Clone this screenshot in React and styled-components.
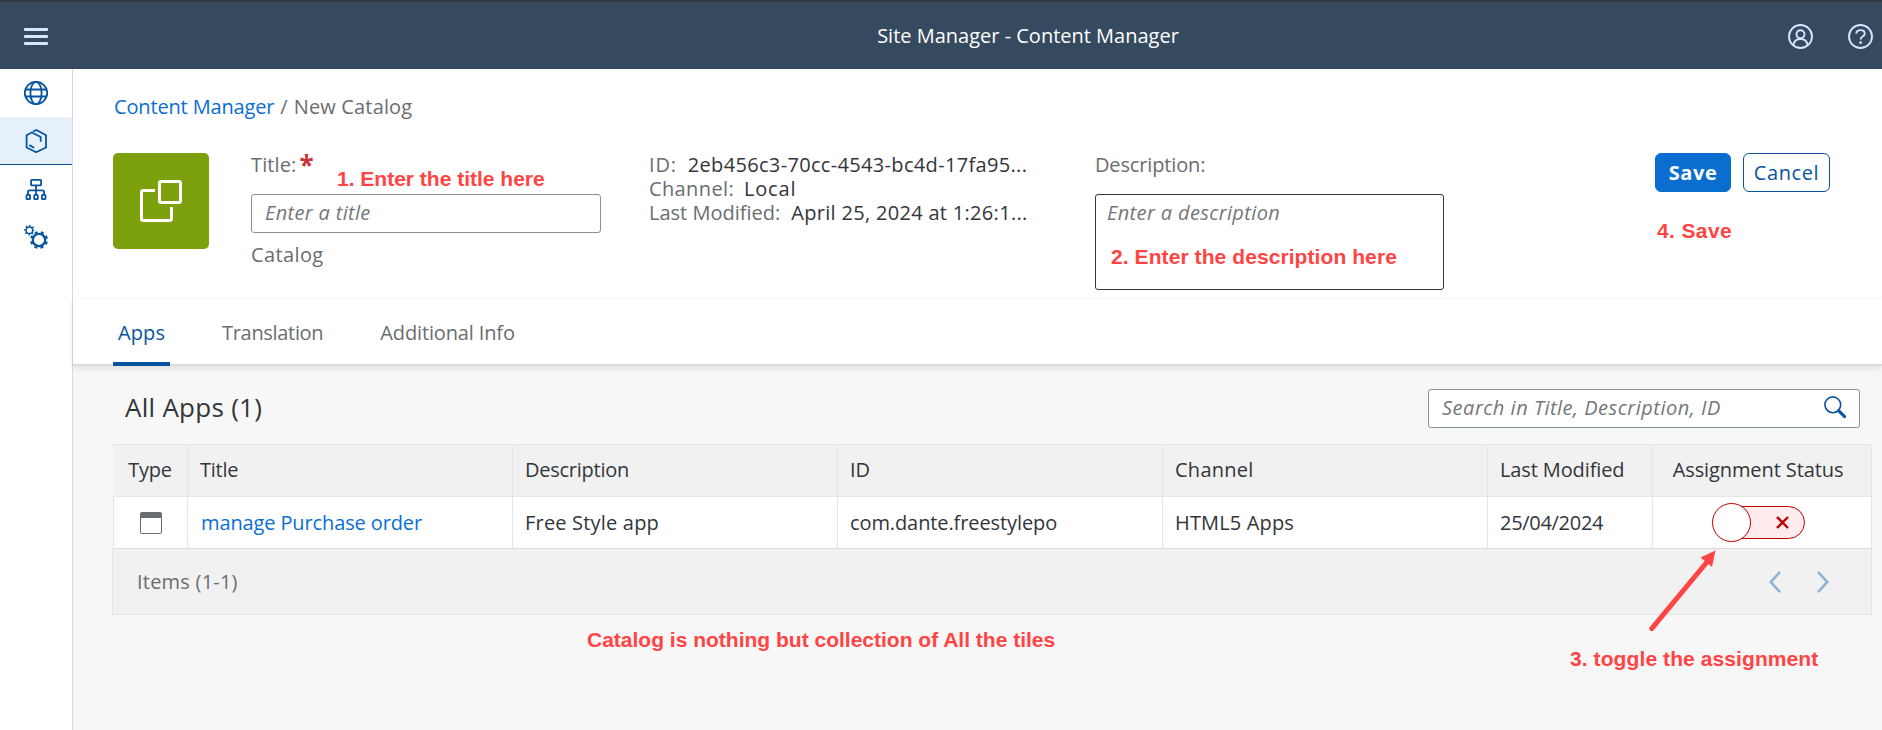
import React from "react";
import styled, { createGlobalStyle } from "styled-components";

const color = {
  shell: "#354a5f",
  shellIcon: "#d1e8ff",
  text: "#32363a",
  label: "#6a6d70",
  link: "#0a6ed1",
  accent: "#0854a0",
  line: "#e5e5e5",
  negative: "#bb0000",
  note: "#ff4444",
};

const GlobalStyle = createGlobalStyle`
  * { box-sizing: border-box; }
  body {
    margin: 0;
    background: #f7f7f7;
    color: ${color.text};
    font: 20px/24px "Open Sans", "Noto Sans", sans-serif;
  }
`;

const Page = styled.div`
  position: relative;
  height: 730px;
  overflow: hidden;
  display: flex;
  flex-direction: column;
`;

const ShellBar = styled.header`
  height: 69px;
  flex: none;
  display: grid;
  grid-template-columns: 304px 1fr 130px;
  align-items: center;
  padding-top: 3px;
  background: linear-gradient(#2f374a 2px, #49454f 2px, #49454f 3px, ${color.shell} 3px);
`;

const MenuButton = styled.div`
  width: 24px;
  margin: 0 0 0 24px;
  display: flex;
  flex-direction: column;
  gap: 4px;
`;

const MenuBar = styled.span`
  height: 3px;
  border-radius: 1px;
  background: ${color.shellIcon};
`;

const ShellTitle = styled.h1`
  margin: 0;
  color: #fff;
  text-align: center;
  font-size: 20px;
  font-weight: 400;
`;

const ShellActions = styled.div`
  display: flex;
  gap: 35px;
  padding-left: 36px;
`;

const Icon = styled.svg`
  display: block;
  flex: none;
  fill: none;
  stroke: currentColor;
  color: ${(p) => p.$color || color.accent};
  stroke-width: ${(p) => p.$stroke || 1.8};
`;

const Body = styled.div`
  flex: 1;
  display: flex;
`;

const SideNav = styled.nav`
  width: 73px;
  flex: none;
  background: #fff;
  border-right: 1px solid #d9d9d9;
`;

const NavItem = styled.div`
  height: 48px;
  display: flex;
  align-items: center;
  justify-content: center;
  background: ${(p) => (p.$active ? "#e5f0fa" : "transparent")};
  box-shadow: ${(p) => (p.$active ? `inset 0 -1px ${color.accent}` : "none")};
`;

const Main = styled.main`
  flex: 1;
  min-width: 0;
`;

const PageHeader = styled.section`
  height: 230px;
  padding: 26px 0 0 40px;
  background: #fff;
  border-bottom: 1px solid #fcfcfc;
`;

const Text = styled.span`
  color: ${(p) => p.$color || "inherit"};
  letter-spacing: ${(p) => p.$track || 0}px;
  white-space: nowrap;
`;

const Breadcrumb = styled.div`
  display: flex;
  gap: 6px;
  padding-left: 1px;
  margin-bottom: 34px;
  color: ${color.label};
`;

const HeaderContent = styled.div`
  display: grid;
  grid-template-columns: 138px 398px 446px 560px 1fr;
  align-items: start;
`;

const Avatar = styled.div`
  width: 96px;
  height: 96px;
  border-radius: 5px;
  background: #7ca10c;
`;

const Field = styled.div`
  display: flex;
  flex-direction: column;
  color: ${color.label};
`;

const FieldLabel = styled.label`
  display: flex;
  height: 24px;
  margin-bottom: 17px;
  gap: 3px;
`;

const Required = styled.span`
  color: #cc3333;
  font-size: 26px;
  font-weight: 700;
  line-height: 24px;
`;

const InputBox = styled.div`
  width: ${(p) => p.$width}px;
  height: ${(p) => p.$height || 39}px;
  display: flex;
  align-items: flex-start;
  justify-content: space-between;
  padding: 6px ${(p) => p.$pad || 13}px;
  border: 1px solid ${(p) => p.$border || "#89919a"};
  border-radius: 3px;
  background: #fff;
  color: #74777a;
  font-style: italic;
`;

const FieldHint = styled.div`
  margin-top: 10px;
`;

const Facts = styled.dl`
  margin: 0;
`;

const Fact = styled.div`
  display: flex;
  gap: ${(p) => p.$gap}px;
`;

const Actions = styled.div`
  display: flex;
  gap: 12px;
`;

const Button = styled.button`
  width: ${(p) => p.$width}px;
  height: 39px;
  padding: 0;
  border: 1px solid ${(p) => (p.$primary ? color.link : color.accent)};
  border-radius: 6px;
  background: ${(p) => (p.$primary ? color.link : "#fff")};
  color: ${(p) => (p.$primary ? "#fff" : color.accent)};
  font: inherit;
  font-weight: ${(p) => (p.$primary ? 700 : 400)};
  line-height: 35px;
  letter-spacing: 0.6px;
`;

const Tabs = styled.div`
  position: relative;
  z-index: 1;
  height: 67px;
  display: flex;
  gap: 47px;
  padding-left: 40px;
  background: #fff;
  box-shadow: inset 0 -2px #dcdcdc, 0 2px 6px rgba(0, 0, 0, 0.1);
`;

const Tab = styled.div`
  height: 67px;
  padding: 0 5px;
  line-height: 67px;
  color: ${(p) => (p.$active ? color.accent : color.label)};
  letter-spacing: ${(p) => p.$track}px;
  box-shadow: ${(p) => (p.$active ? `inset 0 -4px ${color.accent}` : "none")};
`;

const Toolbar = styled.div`
  height: 39px;
  margin: 23px 22px 16px 52px;
  display: flex;
  align-items: center;
  justify-content: space-between;
`;

const SectionTitle = styled.h2`
  margin: 0;
  padding-bottom: 3px;
  font-size: 26px;
  font-weight: 400;
  letter-spacing: 0.27px;
`;

const Table = styled.div`
  margin: 0 10px 0 40px;
`;

const Row = styled.div`
  display: grid;
  grid-template-columns: 75px repeat(4, 325px) 165px 219px;
  height: ${(p) => (p.$head ? 53 : 52)}px;
  background: ${(p) => (p.$head ? "#f1f1f1" : "#fff")};
  border-top: ${(p) => (p.$head ? `1px solid ${color.line}` : "none")};
  border-bottom: 1px solid ${(p) => (p.$head ? color.line : "#d9d9d9")};
  box-shadow: ${(p) => (p.$head ? "none" : `inset 1px 0 ${color.line}`)};
`;

const Cell = styled.div`
  display: flex;
  align-items: center;
  justify-content: ${(p) => (p.$center ? "center" : "flex-start")};
  padding: 0 ${(p) => p.$end || 0}px ${(p) => (p.$head ? 2 : 0)}px ${(p) => p.$start ?? (p.$center ? 0 : 12)}px;
  border-right: 1px solid ${color.line};
`;

const Pager = styled.div`
  height: 66px;
  margin-left: -1px;
  display: flex;
  align-items: center;
  justify-content: space-between;
  padding: 0 42px 0 24px;
  background: #f1f1f1;
  border: 1px solid ${color.line};
  border-top: none;
  color: ${color.label};
`;

const PagerButtons = styled.div`
  display: flex;
  gap: 36px;
`;

const AppGlyph = styled.span`
  width: 22px;
  height: 22px;
  border: 1.5px solid ${color.label};
  border-top-width: 6px;
  border-radius: 2px;
`;

const Switch = styled.div`
  display: flex;
  align-items: center;
`;

const SwitchHandle = styled.span`
  position: relative;
  width: 39px;
  height: 39px;
  margin-right: -20px;
  border: 1px solid ${color.negative};
  border-radius: 50%;
  background: #fff;
`;

const SwitchTrack = styled.span`
  width: 74px;
  height: 33px;
  display: flex;
  align-items: center;
  justify-content: flex-end;
  padding-right: 15px;
  border: 1px solid ${color.negative};
  border-radius: 0 17px 17px 0;
  background: #ffebeb;
`;

const Note = styled.div`
  position: absolute;
  z-index: 2;
  left: ${(p) => p.$x}px;
  top: ${(p) => p.$y}px;
  color: ${color.note};
  font: bold 21px/24px "Liberation Sans", Arial, sans-serif;
  letter-spacing: ${(p) => p.$track || 0}px;
  white-space: nowrap;
`;

const Arrow = styled.svg`
  position: absolute;
  z-index: 2;
  left: 1640px;
  top: 540px;
`;

const GlobeIcon = () => (
  <Icon width="24" height="24" viewBox="0 0 24 24">
    <circle cx="12" cy="12" r="11.2" />
    <ellipse cx="12" cy="12" rx="5.6" ry="11.2" />
    <path d="M1.5 8.5h21M1.5 15.5h21" />
  </Icon>
);

const ContentIcon = () => (
  <Icon width="24" height="24" viewBox="0 0 24 24">
    <path d="M8.2 3.3 2.6 6.2v12.3l9.6 4.7 9.8-4.7V6.2L12.4 1 9 2.5M7.4 3.2l9.3 4.8v4.800M5.300 16.100l4.900 2.600" />
  </Icon>
);

const TreeIcon = () => (
  <Icon width="24" height="24" viewBox="0 0 24 24">
    <rect x="7.1" y="2.9" width="10" height="5.4" rx="0.6" />
    <path d="M12 8.4v9M3.9 17.4v-2.2q0-1.8 1.8-1.8h12.6q1.8 0 1.8 1.8v2.2" />
    <rect x="2.5" y="17.9" width="3.6" height="4.3" rx="0.6" />
    <rect x="10.2" y="17.9" width="3.6" height="4.3" rx="0.6" />
    <rect x="17.9" y="17.9" width="3.6" height="4.3" rx="0.6" />
  </Icon>
);

const GearsIcon = () => (
  <Icon width="24" height="24" viewBox="0 0 24 24">
    <circle cx="5.4" cy="5.2" r="3.3" strokeWidth="1.5" />
    <circle cx="5.4" cy="5.2" r="4.5" strokeWidth="1.6" strokeDasharray="1.5 2.034" strokeDashoffset="0.75" />
    <circle cx="15" cy="15" r="6.2" strokeWidth="2.3" />
    <circle cx="15" cy="15" r="7.9" strokeWidth="2.2" strokeDasharray="3 3.205" strokeDashoffset="-1.6" />
  </Icon>
);

const UserIcon = () => (
  <Icon width="25" height="25" viewBox="0 0 25 25" $color={color.shellIcon} $stroke={1.9}>
    <circle cx="12.5" cy="12.5" r="11.5" />
    <circle cx="12.5" cy="10.2" r="4" />
    <path d="M5.4 21.2c.6-4.2 3.4-6.2 7.1-6.2s6.5 2 7.1 6.2" />
  </Icon>
);

const HelpIcon = () => (
  <Icon width="25" height="25" viewBox="0 0 25 25" $color={color.shellIcon} $stroke={1.9}>
    <circle cx="12.5" cy="12.5" r="11.5" />
    <path d="M8.3 9.6c.1-2.3 1.800-3.500 4.200-3.500s4.200 1.300 4.200 3.400c0 3.200-4.100 2.900-4.100 6" />
    <circle cx="12.6" cy="18.6" r="1.4" fill="currentColor" stroke="none" />
  </Icon>
);

const CatalogIcon = () => (
  <Icon width="96" height="96" viewBox="0 0 96 96" $color="#fff" $stroke={3}>
    <rect x="46.5" y="28.5" width="21" height="21" rx="1.5" />
    <path d="M42 37.5H30.500q-2 0-2 2v26q0 2 2 2h26q2 0 2-2V54" />
  </Icon>
);

const SearchIcon = () => (
  <Icon width="22" height="22" viewBox="0 0 22 22" $stroke={1.6}>
    <circle cx="8.8" cy="8.8" r="7.9" />
    <path d="m14.600 14.600 6 6" strokeWidth="3" strokeLinecap="round" />
  </Icon>
);

const Chevron = ({ d }) => (
  <Icon width="12" height="22" viewBox="0 0 12 22" $color="#91b3d4" $stroke={2.6} strokeLinecap="round">
    <path d={d} />
  </Icon>
);

const columns = [
  { title: "Type", track: -0.22, center: true },
  { title: "Title", track: -0.26 },
  { title: "Description", track: -0.25 },
  { title: "ID", track: 0 },
  { title: "Channel", track: 0.26 },
  { title: "Last Modified", track: -0.12 },
  { title: "Assignment Status", track: -0.1, center: true, end: 8 },
];

export default function App() {
  return (
    <Page>
      <GlobalStyle />
      <ShellBar>
        <MenuButton>
          <MenuBar />
          <MenuBar />
          <MenuBar />
        </MenuButton>
        <ShellTitle>Site Manager - Content Manager</ShellTitle>
        <ShellActions>
          <UserIcon />
          <HelpIcon />
        </ShellActions>
      </ShellBar>

      <Body>
        <SideNav>
          <NavItem><GlobeIcon /></NavItem>
          <NavItem $active><ContentIcon /></NavItem>
          <NavItem><TreeIcon /></NavItem>
          <NavItem><GearsIcon /></NavItem>
        </SideNav>

        <Main>
          <PageHeader>
            <Breadcrumb>
              <Text $color={color.link} $track={-0.15}>Content Manager</Text>
              <Text>/</Text>
              <Text $track={0.16}>New Catalog</Text>
            </Breadcrumb>
            <HeaderContent>
              <Avatar><CatalogIcon /></Avatar>
              <Field>
                <FieldLabel>
                  <Text $track={0.13}>Title:</Text>
                  <Required>*</Required>
                </FieldLabel>
                <InputBox $width={350}>
                  <Text $track={0.34}>Enter a title</Text>
                </InputBox>
                <FieldHint><Text $track={0.38}>Catalog</Text></FieldHint>
              </Field>
              <Facts>
                <Fact $gap={11}>
                  <Text $color={color.label} $track={0.8}>ID:</Text>
                  <Text $track={0.33}>2eb456c3-70cc-4543-bc4d-17fa95...</Text>
                </Fact>
                <Fact $gap={10}>
                  <Text $color={color.label} $track={0.38}>Channel:</Text>
                  <Text $track={0.78}>Local</Text>
                </Fact>
                <Fact $gap={11}>
                  <Text $color={color.label}>Last Modified:</Text>
                  <Text $track={0.31}>April 25, 2024 at 1:26:1...</Text>
                </Fact>
              </Facts>
              <Field>
                <FieldLabel><Text $track={-0.14}>Description:</Text></FieldLabel>
                <InputBox $width={349} $height={96} $pad={11} $border="#32363a">
                  <Text $track={0.37}>Enter a description</Text>
                </InputBox>
              </Field>
              <Actions>
                <Button $primary $width={76}>Save</Button>
                <Button $width={87}>Cancel</Button>
              </Actions>
            </HeaderContent>
          </PageHeader>

          <Tabs>
            <Tab $active $track={0.1}>Apps</Tab>
            <Tab $track={-0.32}>Translation</Tab>
            <Tab $track={-0.14}>Additional Info</Tab>
          </Tabs>

          <Toolbar>
            <SectionTitle>All Apps (1)</SectionTitle>
            <InputBox $width={432}>
              <Text $track={0.51}>Search in Title, Description, ID</Text>
              <SearchIcon />
            </InputBox>
          </Toolbar>

          <Table>
            <Row $head>
              {columns.map((c) => (
                <Cell key={c.title} $head $center={c.center} $end={c.end}>
                  <Text $track={c.track}>{c.title}</Text>
                </Cell>
              ))}
            </Row>
            <Row>
              <Cell $center $start={2}><AppGlyph /></Cell>
              <Cell $start={13}><Text $color={color.link} $track={-0.12}>manage Purchase order</Text></Cell>
              <Cell><Text $track={0.19}>Free Style app</Text></Cell>
              <Cell><Text $track={-0.1}>com.dante.freestylepo</Text></Cell>
              <Cell><Text $track={0.15}>HTML5 Apps</Text></Cell>
              <Cell><Text $track={-0.3}>25/04/2024</Text></Cell>
              <Cell $center $end={8}>
                <Switch>
                  <SwitchHandle />
                  <SwitchTrack>
                    <Icon width="13" height="13" viewBox="0 0 13 13" $color={color.negative} $stroke={2.4}>
                      <path d="m1 1 11 11M12 1 1 12" />
                    </Icon>
                  </SwitchTrack>
                </Switch>
              </Cell>
            </Row>
            <Pager>
              <Text $track={0.22}>Items (1-1)</Text>
              <PagerButtons>
                <Chevron d="M10.300 1.700 1.700 11l8.600 9.300" />
                <Chevron d="m1.700 1.700 8.600 9.300-8.600 9.300" />
              </PagerButtons>
            </Pager>
          </Table>
        </Main>
      </Body>

      <Note $x={337} $y={167}>1. Enter the title here</Note>
      <Note $x={1111} $y={245} $track={0.08}>2. Enter the description here</Note>
      <Note $x={1657} $y={219} $track={0.38}>4. Save</Note>
      <Note $x={1570} $y={647} $track={0.09}>3. toggle the assignment</Note>
      <Note $x={587} $y={628}>Catalog is nothing but collection of All the tiles</Note>
      <Arrow width="90" height="100" viewBox="0 0 90 100">
        <path d="M11.700 88.700 67 22" stroke={color.note} strokeWidth="5" strokeLinecap="round" />
        <path d="M75.500 10.500 60.500 17.500 72 27z" fill={color.note} />
      </Arrow>
    </Page>
  );
}
